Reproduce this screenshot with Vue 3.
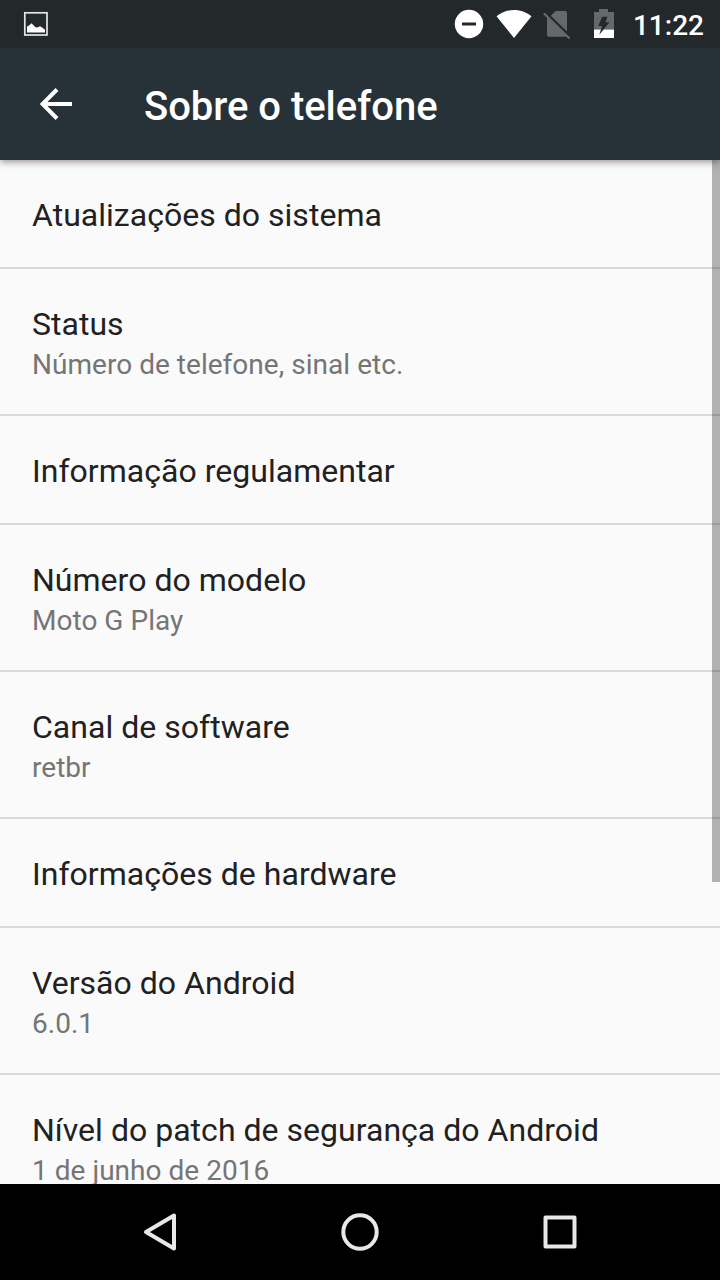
<script setup>
const items = [
  { title: 'Atualizações do sistema' },
  { title: 'Status', sub: 'Número de telefone, sinal etc.' },
  { title: 'Informação regulamentar' },
  { title: 'Número do modelo', sub: 'Moto G Play' },
  { title: 'Canal de software', sub: 'retbr' },
  { title: 'Informações de hardware' },
  { title: 'Versão do Android', sub: '6.0.1' },
  { title: 'Nível do patch de segurança do Android', sub: '1 de junho de 2016' },
]
</script>

<template>
  <div class="phone">
    <div class="status">
      <svg width="720" height="48" viewBox="0 0 720 48">
        <rect x="24.800" y="12.800" width="22.200" height="22.200" fill="none" stroke="#e4e5e5" stroke-width="1.700" />
        <path d="M27 32.500v-6l2-1 2.500-2.200 4 4 2 .3 2.500-1.300 2.500 1.500 2.500 2v2.700z" fill="#fff" />
        <circle cx="469" cy="24" r="14.200" fill="#fff" />
        <rect x="462" y="22.500" width="14" height="3" fill="#23282b" />
        <path d="M514 38L496.500 16.300C501 12.500 507 10 514 10s13 2.500 17.500 6.300z" fill="#fff" />
        <path d="M555.500 11h9.500a2 2 0 0 1 2 2v18.500L550.800 15.700zM547 16.500L566.500 36q-.7.700-1.500.7H549a2 2 0 0 1-2-2z" fill="#66696b" />
        <path d="M544.500 14L569 38" stroke="#66696b" stroke-width="2.200" stroke-linecap="round" />
        <path d="M594 12h5V9h9v3h6v17.500h-20z" fill="#66696b" />
        <path d="M594 29.500h20V38h-20z" fill="#fff" />
        <path d="M602 16.700h5.500l-2 5.500h4L599.300 34.700l2.700-8.700h-3.700z" fill="#23282b" />
      </svg>
      <span class="clock">11:22</span>
    </div>
    <header class="bar">
      <svg class="back" width="32" height="32" viewBox="0 0 32 32"><path d="M32 16H3M17 1.500L2.500 16 17 30.500" fill="none" stroke="#fff" stroke-width="4" /></svg>
      <h1>Sobre o telefone</h1>
    </header>
    <main class="list">
      <div v-for="item in items" :key="item.title" class="row" :class="{ double: item.sub }">
        <div class="title">{{ item.title }}</div>
        <div v-if="item.sub" class="sub">{{ item.sub }}</div>
      </div>
      <div class="scroll"></div>
    </main>
    <nav class="nav">
      <svg width="720" height="96" viewBox="0 0 720 96" fill="none" stroke="#e8e8e8" stroke-width="4" stroke-linejoin="round">
        <path d="M174 31.500v33L146 48z" />
        <circle cx="360" cy="48" r="16.700" />
        <rect x="545.500" y="33.500" width="29" height="29" />
      </svg>
    </nav>
  </div>
</template>

<style>
body { margin: 0; }
</style>

<style scoped>
.phone { width: 720px; height: 1280px; display: flex; flex-direction: column; overflow: hidden; background: #fafafa; font-family: Roboto, sans-serif; }
.status { position: relative; z-index: 3; height: 48px; flex: none; background: #23282b; }
.status svg, .nav svg { display: block; }
.clock { position: absolute; right: 16px; top: 9px; color: #fff; font-size: 28px; line-height: 34px; font-weight: 500; }
.bar { position: relative; z-index: 2; flex: none; height: 112px; box-sizing: border-box; padding: 6px 0 0 40px; display: flex; align-items: center; gap: 72px; background: #263238; color: #fff; box-shadow: 0 2px 7px rgba(60, 40, 50, .5); }
.back { margin-top: -6px; }
h1 { margin: 0; font-size: 40px; line-height: 48px; font-weight: 500; letter-spacing: -.03px; }
.list { position: relative; flex: 1; min-height: 0; overflow: hidden; }
.row { height: 109px; box-sizing: border-box; padding: 36px 32px 0; border-bottom: 2px solid #dadada; }
.double { height: 147px; }
.title { font-size: 32px; line-height: 38px; letter-spacing: .025px; color: #212121; white-space: nowrap; }
.sub { font-size: 28px; line-height: 34px; letter-spacing: .03px; margin-top: 5px; color: #757575; white-space: nowrap; }
.scroll { position: absolute; top: 0; right: 0; width: 8px; height: 722px; background: rgba(0, 0, 0, .29); }
.nav { height: 96px; flex: none; background: #000; }
</style>
